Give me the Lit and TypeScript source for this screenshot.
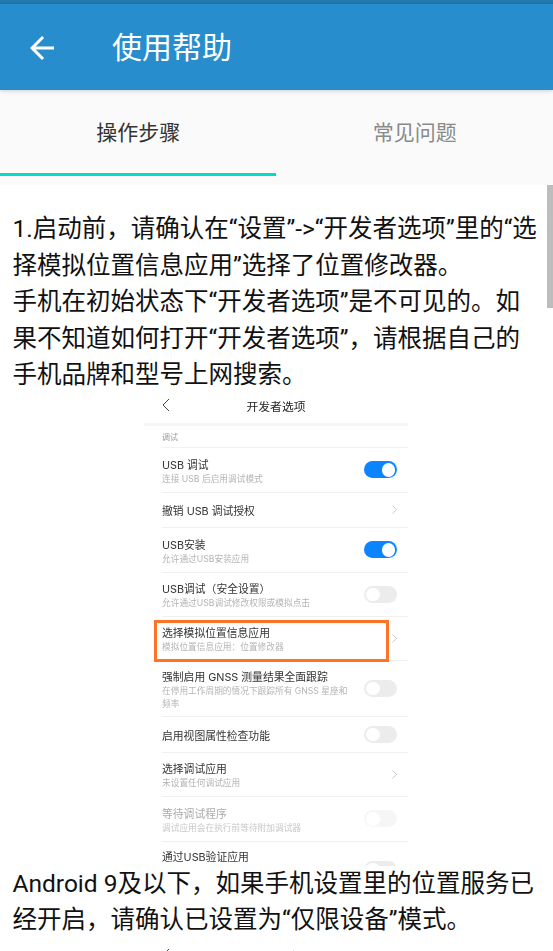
import { LitElement, html, css, nothing } from "lit";
import { customElement } from "lit/decorators.js";

type Row = { h: number; t: string; s?: string[]; k?: "on" | "off" | "dim" | "go"; box?: boolean; faint?: boolean; cut?: boolean };

const rows: Row[] = [
  { h: 45, t: "USB 调试", s: ["连接 USB 后启用调试模式"], k: "on" },
  { h: 35, t: "撤销 USB 调试授权", k: "go" },
  { h: 45, t: "USB安装", s: ["允许通过USB安装应用"], k: "on" },
  { h: 44, t: "USB调试（安全设置）", s: ["允许通过USB调试修改权限或模拟点击"], k: "off" },
  { h: 44, t: "选择模拟位置信息应用", s: ["模拟位置信息应用：位置修改器"], k: "go", box: true },
  { h: 56, t: "强制启用 GNSS 测量结果全面跟踪", s: ["在停用工作周期的情况下跟踪所有 GNSS 星座和", "频率"], k: "off" },
  { h: 36, t: "启用视图属性检查功能", k: "off" },
  { h: 44, t: "选择调试应用", s: ["未设置任何调试应用"], k: "go" },
  { h: 45, t: "等待调试程序", s: ["调试应用会在执行前等待附加调试器"], k: "dim", faint: true },
  { h: 54, t: "通过USB验证应用", k: "off", cut: true },
];

@customElement("app-root")
export class AppRoot extends LitElement {
  static styles = css`
    :host { display: block; width: 553px; height: 951px; overflow: hidden; position: relative; background: #fff;
      font-family: Roboto, "Noto Sans CJK SC", sans-serif; }
    .status { height: 4px; background: #2179ad; }
    .bar { height: 86px; background: #288dcc; display: flex; align-items: center; color: #fff; position: relative; z-index: 1;
      box-shadow: 0 1px 4px rgba(0,0,0,.18); }
    .back { width: 36px; height: 36px; margin: 0 52px 0 24px; fill: #fff; flex: none; position: relative; top: 0.5px; }
    .title { font-size: 30px; line-height: 36px; position: relative; top: 0.5px; }
    .tabs { background: #fafafa; height: 95px; display: flex; flex-direction: column; }
    .tabrow { height: 83px; display: flex; }
    .tab { width: 277px; padding-top: 25px; box-sizing: border-box; text-align: center; font-size: 21px; line-height: 36px; color: #8a8a8a; }
    .tab.active { color: #333; }
    .ind { width: 276px; height: 3px; background: #00dcc8; }
    .content { height: 766px; overflow: hidden; position: relative; padding-top: 26px; box-sizing: border-box; }
    .p { margin: 0; padding: 0 13px 0 12.5px; font-size: 24.5px; line-height: 36.5px; color: #111; }
    .thumb { position: absolute; right: 0; top: 0; width: 6px; height: 123px; background: #bdbdbd; }
    .shotwrap { height: 472px; overflow: hidden; }
    .shotwrap.tail { height: 30px; margin-top: 5px; }
    .shot { width: 264px; margin-left: 144px; filter: blur(0.4px); color: #333; position: relative;
      font-family: Inter, "Noto Sans CJK SC", sans-serif; }
    .head { height: 24px; padding-bottom: 5px; display: flex; align-items: center; justify-content: center; position: relative; font-size: 11.8px; color: #222; }
    .chev { position: absolute; left: 18px; top: 4px; width: 8px; height: 14px; fill: none; stroke: #444; stroke-width: 1; }
    .band { height: 3px; background: #f5f5f5; }
    .sect { height: 22px; margin-left: 18px; font-size: 8px; line-height: 23px; color: #999; border-bottom: 1px solid #f2f2f2; box-sizing: border-box; }
    .row { margin-left: 18px; border-bottom: 1px solid #f0f0f0; box-sizing: border-box; display: flex; align-items: center; position: relative; padding-right: 11px; }
    .txt { flex: 1; min-width: 0; position: relative; top: 2.5px; }
    .t { font-size: 10.8px; line-height: 14px; color: #333; }
    .s { font-size: 8.7px; line-height: 12.5px; color: #b4b4b4; white-space: nowrap; }
    .faint .t { color: #aaa; }
    .faint .s { color: #c8c8c8; }
    .tog { width: 33px; height: 17px; border-radius: 9px; background: #ececec; position: relative; flex: none; }
    .tog::after { content: ""; position: absolute; left: 2px; top: 2px; width: 13.5px; height: 13.5px; border-radius: 50%; background: #fff; }
    .tog.on { background: #0d84ff; }
    .tog.on::after { left: 17.5px; }
    .tog.dim { background: #f6f6f6; }
    .go { width: 33px; height: 12px; flex: none; display: flex; justify-content: flex-end; align-items: center; }
    .go svg { width: 5px; height: 9px; fill: none; stroke: #c4c4c4; stroke-width: 0.9; }
    .box { position: absolute; left: -8px; top: 3px; width: 235px; height: 42px; box-sizing: border-box; border: 3.5px solid #ff7327; }
    .row.cut { align-items: flex-start; }
    .row.cut .txt { top: 0; padding-top: 9px; }
    .row.cut .tog { margin-top: 19px; }
  `;

  private renderRow(r: Row) {
    return html`<div class="row ${r.faint ? "faint" : ""} ${r.cut ? "cut" : ""}" style="height:${r.h}px">
      <div class="txt">
        <div class="t">${r.t}</div>
        ${r.s?.map((l) => html`<div class="s">${l}</div>`) ?? nothing}
      </div>
      ${r.k === "go"
        ? html`<div class="go"><svg viewBox="0 0 5 9"><path d="M.5.5l4 4-4 4"></path></svg></div>`
        : html`<div class="tog ${r.k}"></div>`}
      ${r.box ? html`<div class="box"></div>` : nothing}
    </div>`;
  }

  render() {
    return html`
      <div class="status"></div>
      <div class="bar">
        <svg class="back" viewBox="0 0 24 24"><path d="M20 11H7.83l5.59-5.59L12 4l-8 8 8 8 1.41-1.41L7.83 13H20v-2z"></path></svg>
        <div class="title">使用帮助</div>
      </div>
      <div class="tabs">
        <div class="tabrow">
          <div class="tab active">操作步骤</div>
          <div class="tab">常见问题</div>
        </div>
        <div class="ind"></div>
      </div>
      <div class="content">
        <p class="p">1.启动前，请确认在“设置”-&gt;“开发者选项”里的“选择模拟位置信息应用”选择了位置修改器。<br />手机在初始状态下“开发者选项”是不可见的。如果不知道如何打开“开发者选项”，请根据自己的手机品牌和型号上网搜索。</p>
        <div class="shotwrap">
          <div class="shot">
            <div class="head">
              <svg class="chev" viewBox="0 0 8 14"><path d="M7 1L1 7l6 6"></path></svg>
              开发者选项
            </div>
            <div class="band"></div>
            <div class="sect">调试</div>
            ${rows.map((r) => this.renderRow(r))}
          </div>
        </div>
        <p class="p">Android 9及以下，如果手机设置里的位置服务已经开启，请确认已设置为“仅限设备”模式。</p>
        <div class="shotwrap tail">
          <div class="shot">
            <div class="head">
              <svg class="chev" viewBox="0 0 8 14"><path d="M7 1L1 7l6 6"></path></svg>
              位置信息
            </div>
          </div>
        </div>
        <div class="thumb"></div>
      </div>
    `;
  }
}
